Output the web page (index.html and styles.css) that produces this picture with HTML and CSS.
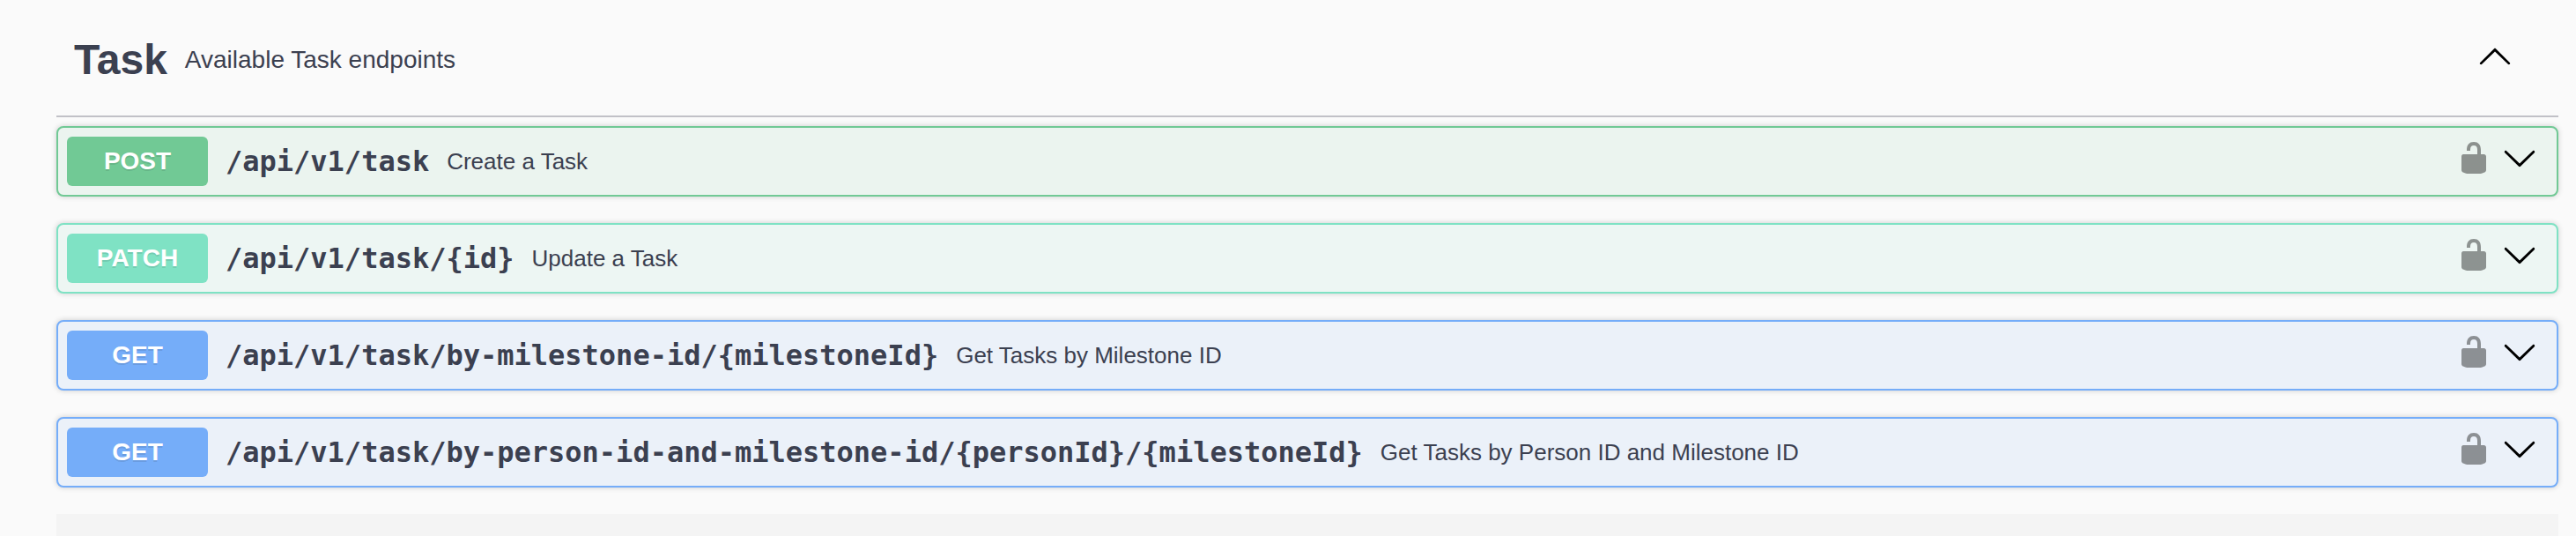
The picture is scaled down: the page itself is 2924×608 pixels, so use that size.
FILE: index.html
```html
<!DOCTYPE html>
<html lang="en">
<head>
<meta charset="utf-8">
<title>Task</title>
<link rel="stylesheet" href="styles.css">
</head>
<body>
<svg class="defs" aria-hidden="true">
  <symbol id="arrow-up" viewBox="0 0 20 20"><path d="M17.418 14.908c.272.268.709.268.979 0s.271-.701 0-.969l-7.908-7.83c-.27-.268-.707-.268-.979 0l-7.908 7.83c-.27.268-.27.701 0 .969.271.268.709.268.979 0L10 7.767l7.418 7.141z"/></symbol>
  <symbol id="arrow-down" viewBox="0 0 20 20"><path d="M17.418 6.109c.272-.268.709-.268.979 0s.271.701 0 .969l-7.908 7.83c-.27.268-.707.268-.979 0l-7.908-7.83c-.27-.268-.27-.701 0-.969.271-.268.709-.268.979 0L10 13.25l7.418-7.141z"/></symbol>
  <symbol id="unlocked" viewBox="0 0 20 20"><path d="M15.8 8H14V5.6C14 2.703 12.665 1 10 1 7.334 1 6 2.703 6 5.6V6h2v-.801C8 3.754 8.797 3 10 3c1.203 0 2 .754 2 2.199V8H4c-.553 0-1 .646-1 1.199V17c0 .549.428 1.139.951 1.307l1.197.387C5.672 18.861 6.55 19 7.1 19h5.8c.549 0 1.428-.139 1.951-.307l1.196-.387c.524-.167.953-.757.953-1.306V9.199C17 8.646 16.352 8 15.8 8z"/></symbol>
</svg>
<main class="wrapper">
  <header class="tag">
    <h3 class="tag-name">Task</h3>
    <p class="tag-description">Available Task endpoints</p>
    <svg class="icon"><use href="#arrow-up"/></svg>
  </header>
  <section class="operations">
    <article class="opblock post">
      <span class="method">POST</span>
      <span class="path">/api/v1/task</span>
      <span class="description">Create a Task</span>
      <svg class="icon lock"><use href="#unlocked"/></svg>
      <svg class="icon"><use href="#arrow-down"/></svg>
    </article>
    <article class="opblock patch">
      <span class="method">PATCH</span>
      <span class="path">/api/v1/task/{id}</span>
      <span class="description">Update a Task</span>
      <svg class="icon lock"><use href="#unlocked"/></svg>
      <svg class="icon"><use href="#arrow-down"/></svg>
    </article>
    <article class="opblock get">
      <span class="method">GET</span>
      <span class="path">/api/v1/task/by-milestone-id/{milestoneId}</span>
      <span class="description">Get Tasks by Milestone ID</span>
      <svg class="icon lock"><use href="#unlocked"/></svg>
      <svg class="icon"><use href="#arrow-down"/></svg>
    </article>
    <article class="opblock get">
      <span class="method">GET</span>
      <span class="path">/api/v1/task/by-person-id-and-milestone-id/{personId}/{milestoneId}</span>
      <span class="description">Get Tasks by Person ID and Milestone ID</span>
      <svg class="icon lock"><use href="#unlocked"/></svg>
      <svg class="icon"><use href="#arrow-down"/></svg>
    </article>
  </section>
  <div class="next-section"></div>
</main>
</body>
</html>
```
FILE: styles.css
```css
* { box-sizing: border-box; }
body {
  margin: 0;
  height: 608px;
  overflow: hidden;
  background: #fafafa;
  color: #3b4050;
  font-family: "Liberation Sans", Arial, sans-serif;
}
.defs { display: none; }
.wrapper {
  display: flex;
  flex-direction: column;
  height: 608px;
  padding: 0 20px 0 64px;
}
.tag {
  display: flex;
  align-items: center;
  height: 133px;
  padding: 0 52px 5px 20px;
  border-bottom: 2px solid #c1c1c7;
}
.tag-name {
  margin: 0;
  padding-top: 10px;
  font-size: 48px;
  line-height: 56px;
}
.tag-description {
  flex: 1;
  margin: 0;
  padding: 10px 20px 0;
  font-size: 28px;
  line-height: 32px;
}
.icon {
  flex: none;
  width: 40px;
  height: 40px;
}
.operations {
  display: flex;
  flex-direction: column;
  gap: 30px;
  padding: 10px 0 30px;
}
.opblock {
  display: flex;
  align-items: center;
  height: 80px;
  padding: 10px 22px 10px 10px;
  border: 2px solid;
  border-radius: 8px;
  box-shadow: 0 0 6px rgba(0, 0, 0, .19);
  white-space: nowrap;
}
.method {
  width: 160px;
  height: 56px;
  border-radius: 6px;
  color: #fff;
  font-size: 28px;
  font-weight: 700;
  line-height: 56px;
  text-align: center;
  text-shadow: 0 2px 0 rgba(0, 0, 0, .1);
}
.path {
  padding: 0 20px;
  font-family: "DejaVu Sans Mono", monospace;
  font-size: 32px;
  font-weight: 700;
  line-height: 38px;
}
.description {
  flex: 1;
  font-size: 26px;
  line-height: 30px;
}
.opblock .icon { margin-bottom: 8px; }
.lock { margin-right: 12px; opacity: .4; }
.post { border-color: #71c995; background: #ebf4ef; }
.post .method { background: #71c995; }
.patch { border-color: #7fe2c4; background: #edf6f3; }
.patch .method { background: #7fe2c4; }
.get { border-color: #75adf9; background: #ebf1f9; }
.get .method { background: #75adf9; }
.next-section { flex: 1; background: #f4f4f4; }
```
